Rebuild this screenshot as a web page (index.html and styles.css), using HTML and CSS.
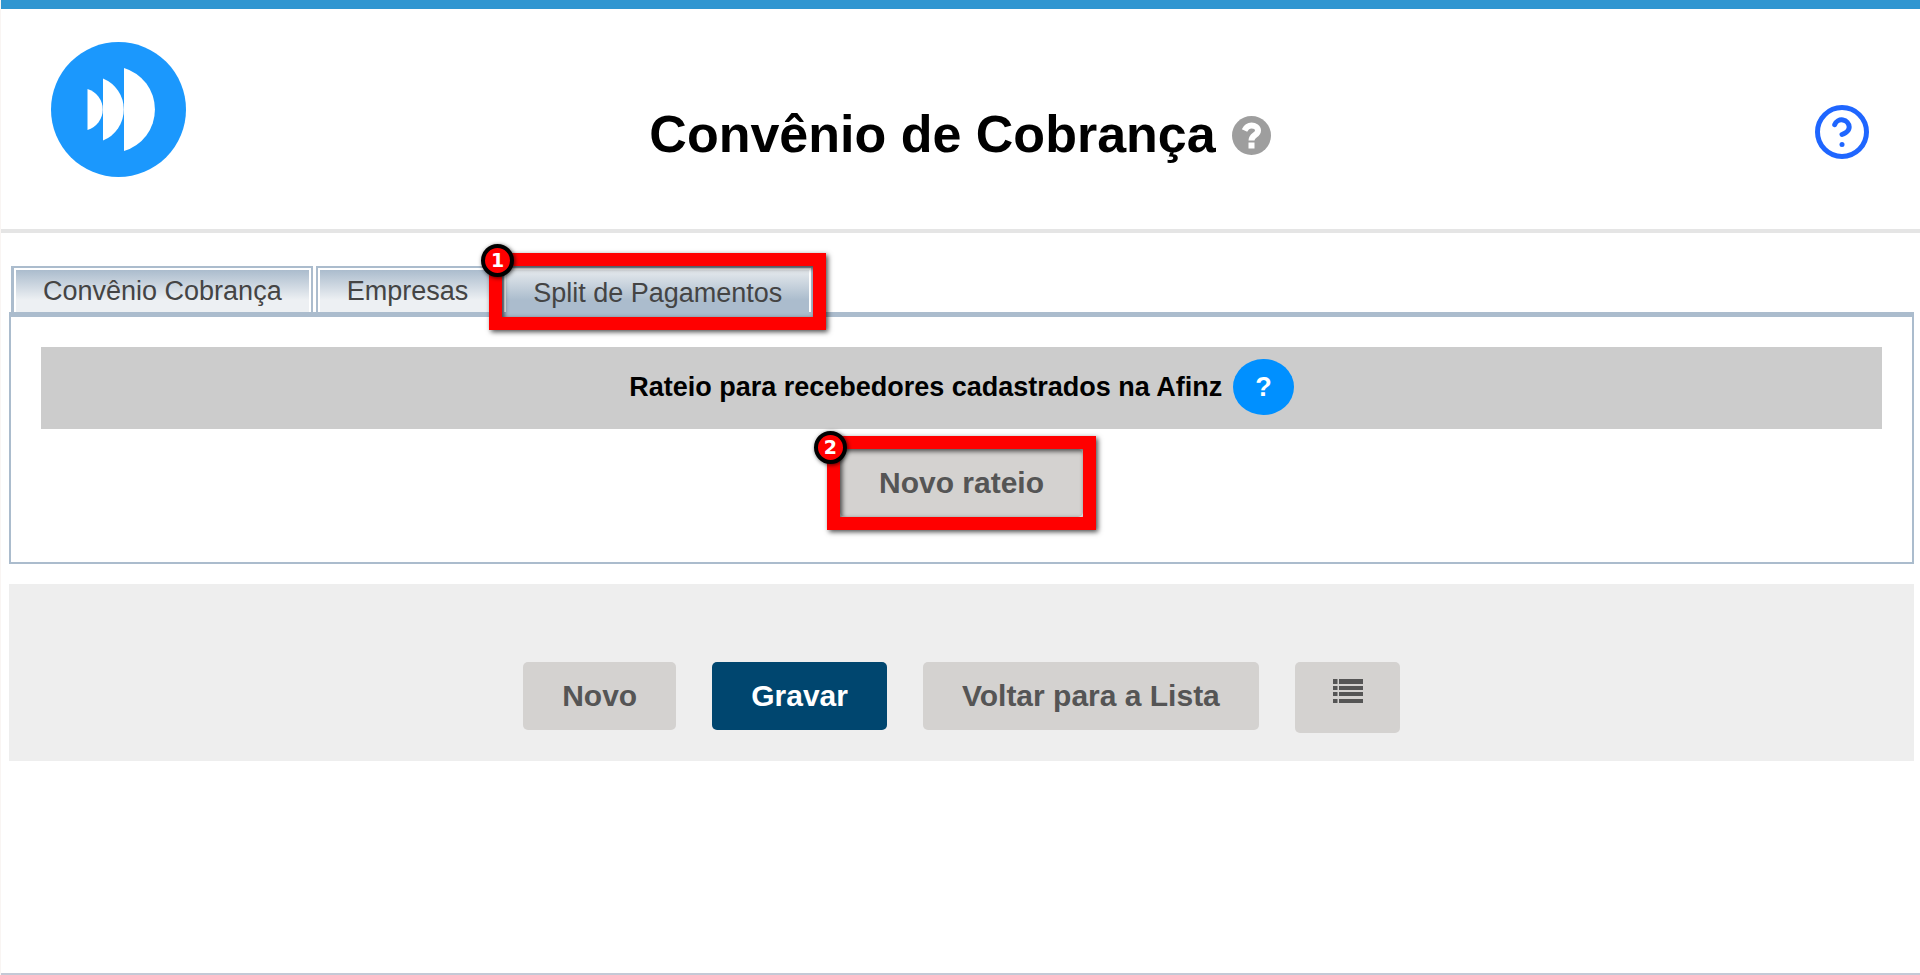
FILE: index.html
```html
<!DOCTYPE html>
<html lang="pt-BR">
    <head>
        <meta charset="utf-8">
        <title>Convênio de Cobrança</title>
        <link rel="stylesheet" href="styles.css">
    </head>
    <body>
        <div class="page">
            <header class="header">
                <svg class="logo" viewBox="0 0 135 135" role="img" aria-label="Logo">
                    <circle cx="67.5" cy="67.5" r="67.5" fill="#1b98fd"/>
                    <path d="M36.500 47 A21.400 21.400 0 0 1 36.500 88 Z" fill="#fff"/>
                    <path d="M52 36.500 A33.500 33.500 0 0 1 52 98.500 Z" fill="#fff"/>
                    <path d="M73 26 A43.300 43.300 0 0 1 73 109 Z" fill="#fff"/>
                </svg>
                <div class="title">
                    <h1>Convênio de Cobrança</h1>
                    <button type="button" class="title-help" aria-label="Ajuda do convênio">
                        <svg viewBox="0 0 39 39">
                            <circle cx="19.5" cy="19.5" r="19.5" fill="#9e9e9e"/>
                            <path d="M12.500 14.500 C14.500 10.500 16.500 9.500 19.500 9.500 C23 9.500 26 11.500 26 14.500 C26 19.500 19.500 18.500 19.500 24.500" fill="none" stroke="#fff" stroke-width="6"/>
                            <rect x="16.500" y="26.500" width="6" height="6" fill="#fff"/>
                        </svg>
                    </button>
                </div>
                <a class="help" href="#" aria-label="Ajuda">
                    <svg viewBox="0 0 54 54" fill="none" stroke="#1f66ff" stroke-width="5" stroke-linecap="round" stroke-linejoin="round">
                        <circle cx="27" cy="27" r="24.5"/>
                        <path d="M19.700 19.700 A7.500 7.500 0 0 1 34.200 22 C34.200 27 27 29.500 27 29.500"/>
                        <path d="M27 39.500 h0.010"/>
                    </svg>
                </a>
            </header>

            <main class="content">
                <ul class="tabs">
                    <li class="tab"><a href="#">Convênio Cobrança</a></li>
                    <li class="tab"><a href="#">Empresas</a></li>
                    <li class="tab active">
                        <a href="#">Split de Pagamentos</a>
                        <span class="mark"><span class="mark-number">1</span></span>
                    </li>
                </ul>

                <section class="panel">
                    <div class="panel-title">
                        <h2>Rateio para recebedores cadastrados na Afinz</h2>
                        <button type="button" class="round-help">?</button>
                    </div>
                    <div class="new-split">
                        <button type="button" class="btn">Novo rateio</button>
                        <span class="mark"><span class="mark-number">2</span></span>
                    </div>
                </section>

                <div class="actions">
                    <button type="button" class="btn">Novo</button>
                    <button type="submit" class="btn btn-save">Gravar</button>
                    <button type="button" class="btn">Voltar para a Lista</button>
                    <button type="button" class="btn btn-list" aria-label="Lista">
                        <svg viewBox="0 0 30 24" fill="#555">
                            <path d="M0 0h4.500v5H0z M6 0h24v5H6z M0 7h4.500v4H0z M6 7h24v4H6z M0 13h4.500v4H0z M6 13h24v4H6z M0 20h4.500v4H0z M6 20h24v4H6z"/>
                        </svg>
                    </button>
                </div>
            </main>
        </div>
    </body>
</html>
```
FILE: styles.css
```css
*
{
    box-sizing: border-box;
}
body
{
    margin: 0;
    padding-left: 1px;
    background-color: #f9f5f3;
    font-family: Arial, "Liberation Sans", sans-serif;
}
h1, h2
{
    margin: 0;
}
button
{
    font-family: inherit;
    border: 0;
    cursor: pointer;
}
svg
{
    display: block;
}
.page
{
    min-height: 100vh;
    background-color: #fff;
    border-top: 9px solid #3096d1;
    border-bottom: 2px solid #c4c9d6;
}

/* header */
.header
{
    display: grid;
    grid-template-columns: 1fr auto 1fr;
    align-items: center;
    padding: 33px 51px 52px 50px;
    border-bottom: 4px solid #e5e5e5;
}
.logo
{
    width: 135px;
    height: 135px;
}
.title
{
    display: flex;
    align-items: center;
    gap: 16px;
    padding-top: 48px;
}
.title h1
{
    font-size: 52px;
    line-height: 60px;
}
.title-help
{
    width: 39px;
    padding: 4px 0 0;
    background: none;
}
.help
{
    justify-self: end;
    width: 54px;
    padding-top: 45px;
}

/* tabs */
.content
{
    padding: 33px 6px 0 8px;
}
.tabs
{
    display: flex;
    align-items: flex-start;
    gap: 3px;
    margin: 0;
    padding: 0 2px;
    list-style: none;
}
.tab
{
    padding: 2px 2px 0;
    border: 2px solid #abbccd;
    border-bottom: 0;
}
.tab:first-child
{
    border-left-width: 3px;
}
.tab a
{
    display: block;
    padding: 0 27px;
    background: linear-gradient(#abbccd, #edf0f3 30px);
    color: #444;
    font-size: 27px;
    line-height: 42px;
    text-decoration: none;
}
.tab.active
{
    position: relative;
    z-index: 1;
    margin-bottom: -5px;
}
.tab.active a
{
    padding-bottom: 1px;
    background: linear-gradient(#e5e9ed, #abbccd 30px);
    line-height: 46px;
}

/* red numbered marks drawn around a control */
.mark
{
    position: absolute;
    inset: -13px;
    border: 13px solid #f00;
    box-shadow: 2px 2px 5px rgba(0, 0, 0, 0.7), inset 2px 2px 5px rgba(0, 0, 0, 0.7);
    pointer-events: none;
}
.tab .mark
{
    inset: -15px -15px -13px;
}
.mark-number
{
    position: absolute;
    top: -22px;
    left: -21px;
    width: 33px;
    height: 33px;
    border: 4px solid #000;
    border-radius: 50%;
    background-color: #f00;
    box-shadow: 1px 1px 4px rgba(0, 0, 0, 0.7);
    color: #fff;
    font: bold 19px/25px "DejaVu Sans", sans-serif;
    text-align: center;
}
.new-split .mark-number
{
    top: -18px;
    left: -26px;
}

/* panel */
.panel
{
    padding: 30px 30px 45px;
    border: 2px solid #abbccd;
    border-top-width: 5px;
}
.panel-title
{
    display: flex;
    justify-content: center;
    align-items: center;
    gap: 11px;
    padding: 12px 0 14px;
    background-color: #ccc;
}
.panel-title h2
{
    font-size: 27px;
    line-height: 30px;
}
.round-help
{
    padding: 0 22px;
    border-radius: 50%;
    background-color: #0090ff;
    color: #fff;
    font-size: 27px;
    font-weight: bold;
    line-height: 56px;
}
.new-split
{
    position: relative;
    width: fit-content;
    margin: 20px auto 0;
}

/* buttons */
.btn
{
    display: block;
    padding: 0 39px;
    border-radius: 5px;
    background-color: #d4d2d0;
    color: #555;
    font-size: 30px;
    font-weight: bold;
    line-height: 68px;
}
.btn-save
{
    background-color: #00466f;
    color: #fff;
}
.btn-list
{
    padding: 17px 37px 30px 38px;
}
.btn-list svg
{
    width: 30px;
    height: 24px;
}
.actions
{
    display: flex;
    justify-content: center;
    align-items: flex-start;
    gap: 36px;
    margin-top: 20px;
    padding: 78px 0 28px;
    background-color: #eee;
}
```
